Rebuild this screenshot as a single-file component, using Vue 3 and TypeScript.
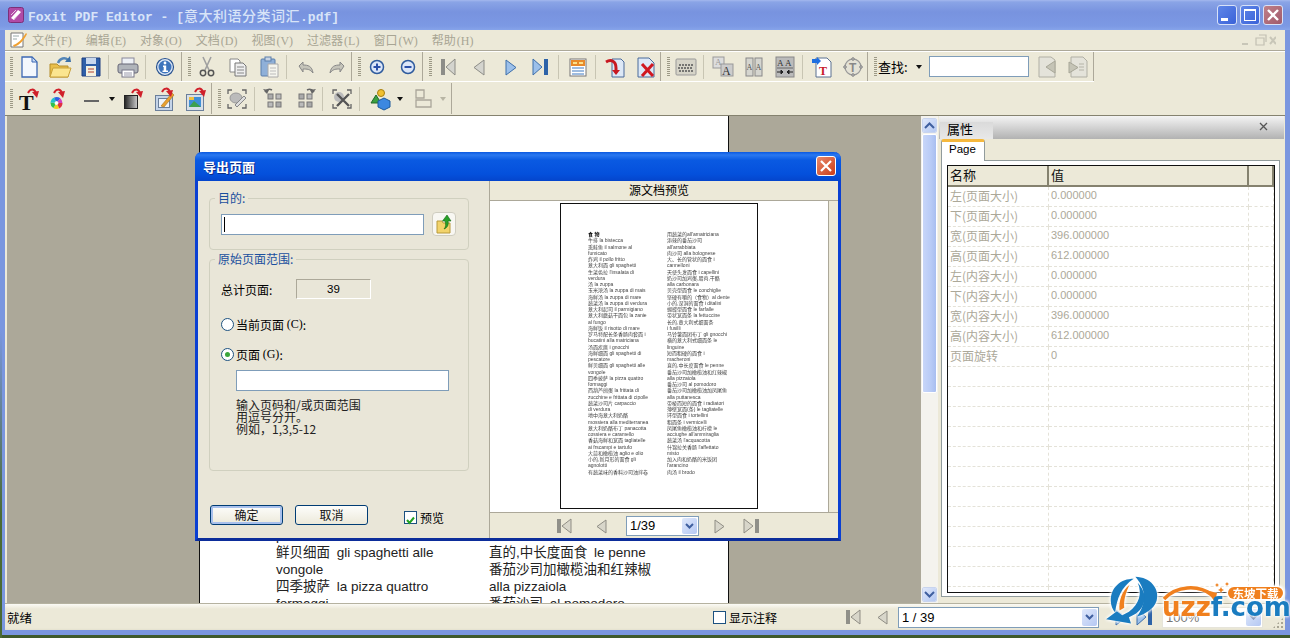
<template>
  <div class="desktop">
    <div class="window">
      <header class="titlebar">
        <svg class="app-icon" width="16" height="16" viewBox="0 0 16 16"><rect x="0.5" y="0.5" width="15" height="15" rx="2" fill="#b04aa6" stroke="#7c2f78" /><path d="M3 11L10 3l3 2-7 8z" fill="#fff" /><path d="M3 8l5-5M5 13l6-6" stroke="#e8c8e6" fill="none" /></svg>
        <span class="title-text">Foxit PDF Editor - [<span class="title-cjk">意大利语分类词汇</span>.pdf]</span>
        <div class="caption-btns">
          <button class="cap"><i class="cap-min"></i></button>
          <button class="cap"><i class="cap-max"></i></button>
          <button class="cap cap-close">
            <svg width="14" height="14" viewBox="0 0 14 14"><path d="M2 2l10 10M12 2L2 12" stroke="#fff" stroke-width="2.4" /></svg>
          </button>
        </div>
      </header>

      <nav class="menubar">
        <svg class="menu-icon" width="18" height="18" viewBox="0 0 18 18"><path d="M1 2h12v14H1z" fill="#fff" stroke="#777" /><path d="M3 14C8 13 12 8 16 2l1 1C14 9 10 14 4 16z" fill="#f0a030" /><path d="M3 5h6M3 8h4" stroke="#9aa" /></svg>
        <span v-for="m in menus" :key="m.label" class="menu-item">{{ m.label }}<em>({{ m.key }})</em></span>
        <div class="mdi-btns">
          <svg width="37" height="14" viewBox="0 0 37 14"><path d="M3 10h6v2H3z" fill="#c8c6b8" /><path d="M17 5h8v7h-8zM20 2h7v7" fill="none" stroke="#c2c0b2" stroke-width="1.2" /><path d="M31 4l6 7M37 4l-6 7" stroke="#c8c6b8" stroke-width="2" /></svg>
        </div>
      </nav>

      <div v-for="(row, r) in toolbars" :key="r" class="toolrow" :class="r === 0 ? 'row-top' : 'row-bottom'">
        <div v-for="(group, g) in row" :key="g" class="toolgroup" :class="{ 'with-pad': g === 0 }">
          <i class="grip"></i>
          <template v-for="(tool, t) in group" :key="t">
            <i v-if="tool === '|'" class="sep"></i>
            <span v-else-if="tool.endsWith('+')" class="tool drop">
              <svg width="24" height="24" viewBox="0 0 24 24" v-html="icons[tool.slice(0, -1)]"></svg>
              <i class="mini-arrow" :class="{ off: tool === 'layoutObj+' }"></i>
            </span>
            <span v-else class="tool">
              <svg width="24" height="24" viewBox="0 0 24 24" v-html="icons[tool]"></svg>
            </span>
          </template>
          <template v-if="r === 0 && g === row.length - 1">
            <span class="find-label">查找:</span>
            <i class="mini-arrow find-arrow"></i>
            <span class="find-input"></span>
            <span class="tool find-tool"><svg width="24" height="24" viewBox="0 0 24 24" v-html="icons.findPrev"></svg></span>
            <span class="tool find-tool"><svg width="24" height="24" viewBox="0 0 24 24" v-html="icons.findNext"></svg></span>
          </template>
        </div>
      </div>

      <main class="workspace">
        <section class="doc-area">
          <article class="doc-page">
            <div class="doc-cols">
              <div class="doc-col">
                <p>pescatore</p>
                <p>鲜贝细面&ensp;gli spaghetti alle</p>
                <p>vongole</p>
                <p>四季披萨&ensp;la pizza quattro</p>
                <p>formaggi</p>
              </div>
              <div class="doc-col">
                <p>macheroni</p>
                <p>直的,中长度面食&ensp;le penne</p>
                <p>番茄沙司加橄榄油和红辣椒</p>
                <p>alla pizzaiola</p>
                <p>番茄沙司&ensp;al pomodoro</p>
              </div>
            </div>
          </article>
        </section>

        <div class="vscroll">
          <span class="sb-btn"><svg width="11" height="7" viewBox="0 0 11 7"><path d="M1 6l4.500-4.500L10 6" fill="none" stroke="#3f5f9f" stroke-width="2" /></svg></span>
          <span class="sb-thumb"></span>
          <span class="sb-track"></span>
          <span class="sb-btn"><svg width="11" height="7" viewBox="0 0 11 7"><path d="M1 1l4.500 4.500L10 1" fill="none" stroke="#3f5f9f" stroke-width="2" /></svg></span>
        </div>

        <aside class="panel">
          <div class="panel-head">
            <span class="panel-tab">属性</span>
            <svg class="panel-x" width="9" height="9" viewBox="0 0 9 9"><path d="M1 1l7 7M8 1L1 8" stroke="#555" stroke-width="1.3" /></svg>
          </div>
          <div class="tabstrip"><span class="page-tab">Page</span></div>
          <div class="tab-body">
            <div class="grid">
              <div class="grid-row grid-head"><span>名称</span><span>值</span><span></span></div>
              <div v-for="(p, i) in gridRows" :key="i" class="grid-row">
                <span>{{ p[0] }}</span><span class="val">{{ p[1] }}</span><span></span>
              </div>
            </div>
          </div>
        </aside>
      </main>

      <footer class="statusbar">
        <span class="ready">就绪</span>
        <i class="check"></i>
        <span class="notes">显示注释</span>
        <span class="st-nav first"><svg width="24" height="24" viewBox="0 0 24 24" v-html="icons.firstOff"></svg></span>
        <span class="st-nav"><svg width="24" height="24" viewBox="0 0 24 24" v-html="icons.prevOff"></svg></span>
        <span class="combo page-combo">1 / 39<i class="combo-btn"><svg width="9" height="6" viewBox="0 0 9 6"><path d="M1 1l3.500 3.500L8 1" fill="none" stroke="#3f5f9f" stroke-width="2" /></svg></i></span>
        <span class="st-nav next"><svg width="24" height="24" viewBox="0 0 24 24" v-html="icons.next"></svg></span>
        <span class="st-nav last"><svg width="24" height="24" viewBox="0 0 24 24" v-html="icons.last"></svg></span>
        <span class="combo zoom-combo">100%<i class="combo-btn"><svg width="9" height="6" viewBox="0 0 9 6"><path d="M1 1l3.500 3.500L8 1" fill="none" stroke="#7f8fb0" stroke-width="2" /></svg></i></span>
        <i class="size-grip"></i>
      </footer>
    </div>

    <div class="dialog">
      <div class="dlg-title">
        <span>导出页面</span>
        <button class="dlg-close"><svg width="14" height="14" viewBox="0 0 14 14"><path d="M2 2l10 10M12 2L2 12" stroke="#fff" stroke-width="2.2" /></svg></button>
      </div>
      <div class="dlg-body">
        <div class="dlg-left">
          <fieldset class="fs fs-target">
            <legend>目的:</legend>
            <div class="target-row">
              <span class="input target-input"><i class="caret"></i></span>
              <span class="browse">
                <svg width="18" height="20" viewBox="0 0 18 20"><path d="M2 7h5l1 2h7v10H2z" fill="#f2d36a" stroke="#b89a3a" /><path d="M9 15c2-2 2-5 1-8H7.500L12 1l4 6h-3c1 4-1 7-4 8z" fill="#28a028" stroke="#106a10" stroke-width=".6" /></svg>
              </span>
            </div>
          </fieldset>
          <fieldset class="fs fs-range">
            <legend>原始页面范围:</legend>
            <div class="total-row">
              <span class="total-label">总计页面:</span>
              <span class="total-val">39</span>
            </div>
            <label class="radio-row first-radio"><i class="radio"></i>当前页面 <u>(C)</u>:</label>
            <label class="radio-row second-radio"><i class="radio on"></i>页面 <u>(G)</u>:</label>
            <span class="input pages-input"></span>
            <p class="hint">输入页码和/或页面范围<br />用逗号分开。<br />例如，1,3,5-12</p>
          </fieldset>
          <div class="dlg-foot">
            <button class="xp-btn default">确定</button>
            <button class="xp-btn">取消</button>
            <label class="preview-check"><i class="check checked"><svg width="11" height="11" viewBox="0 0 11 11"><path d="M2 5l2.500 3L9 2.500" fill="none" stroke="#21a121" stroke-width="2" /></svg></i>预览</label>
          </div>
        </div>
        <div class="dlg-right">
          <div class="pv-head">源文档预览</div>
          <div class="pv-main">
            <div class="pv-white">
              <div class="pv-page">
                <div class="pv-col">
                  <p v-for="(l, i) in previewLeft" :key="i" :class="{ head: i === 0 }">{{ l }}</p>
                </div>
                <div class="pv-col">
                  <p v-for="(l, i) in previewRight" :key="i">{{ l }}</p>
                </div>
              </div>
            </div>
          </div>
          <div class="pv-foot">
            <svg class="pv-first" width="24" height="24" viewBox="0 0 24 24" v-html="icons.firstOff"></svg>
            <svg class="pv-prev" width="24" height="24" viewBox="0 0 24 24" v-html="icons.prevOff"></svg>
            <span class="combo pv-combo">1/39<i class="combo-btn"><svg width="9" height="6" viewBox="0 0 9 6"><path d="M1 1l3.500 3.500L8 1" fill="none" stroke="#3f5f9f" stroke-width="2" /></svg></i></span>
            <svg class="pv-next" width="24" height="24" viewBox="0 0 24 24" v-html="icons.nextOff"></svg>
            <svg class="pv-last" width="24" height="24" viewBox="0 0 24 24" v-html="icons.lastOff"></svg>
          </div>
        </div>
      </div>
    </div>

    <div class="watermark">
      <svg class="wm-mark" width="64" height="54" viewBox="0 0 190 160">
        <path d="M105 14C150 15 178 50 168 85 160 110 135 124 110 132 130 105 146 60 105 14z" fill="#1a7cc0" />
        <path d="M100 20C62 20 32 45 32 85 32 100 38 112 45 120 50 80 62 45 100 20z" fill="#1a7cc0" />
        <path d="M88 38C66 55 55 85 58 114L72 106C70 85 76 60 88 38z" fill="#f0801e" />
        <path d="M112 32C126 65 116 95 86 118L66 128 50 116 18 140 92 153 86 134C128 120 152 75 112 32z" fill="#1a7cc0" />
      </svg>
      <svg class="wm-arc" width="72" height="24" viewBox="0 0 72 24">
        <path d="M2 17C14 4 36 2 50 13" fill="none" stroke="#f0801e" stroke-width="3.500" />
        <path d="M44 8l11 3-2 9z" fill="#f0801e" />
        <path d="M59 5l1 2 2 1-2 1-1 2-1-2-2-1 2-1zM55 1l.7 1.300L57 3l-1.300.7L55 5l-.7-1.300L53 3l1.300-.7zM65 0l.7 1.300L67 2l-1.300.7L65 4l-.7-1.300L63 2l1.300-.7z" fill="#f0801e" />
      </svg>
      <span class="wm-badge">东坡下载</span>
      <span class="wm-uzzf">uzz<span class="wm-com">f.com</span></span>
    </div>
    <i class="desk-edge"></i>
  </div>
</template>

<script setup lang="ts">
const menus = [
  { label: '文件', key: 'F' },
  { label: '编辑', key: 'E' },
  { label: '对象', key: 'O' },
  { label: '文档', key: 'D' },
  { label: '视图', key: 'V' },
  { label: '过滤器', key: 'L' },
  { label: '窗口', key: 'W' },
  { label: '帮助', key: 'H' },
];

const redArrow = (x: number, y: number) =>
  `<path d="M${x} ${y + 4}C${x + 2} ${y} ${x + 6} ${y - 1} ${x + 8} ${y + 4}" fill="none" stroke="#d0202a" stroke-width="2"/><path d="M${x + 4} ${y + 3}l7-1-2 7z" fill="#d0202a"/>`;
const dashed = '<path d="M3 7V3h4M17 3h4v4M21 17v4h-4M7 21H3v-4" fill="none" stroke="#666" stroke-width="1.300"/>';
const nodes = '<rect x="6" y="7" width="5" height="5" fill="#aaa" stroke="#777"/><rect x="14" y="7" width="5" height="5" fill="#bbb" stroke="#777"/><rect x="6" y="15" width="5" height="5" fill="#bbb" stroke="#777"/><rect x="14" y="15" width="5" height="5" fill="#aaa" stroke="#777"/>';
const letter = (x: number, y: number, s: number, c = '#555') =>
  `<text x="${x}" y="${y}" font-family="Liberation Serif" font-size="${s}" fill="${c}">A</text>`;
const wheel = ['#e03040', '#f0d020', '#30c050', '#20c0d0', '#3060e0', '#d040c0']
  .map((c, i) => `<circle cx="8.500" cy="16" r="4" fill="none" stroke="${c}" stroke-width="4" stroke-dasharray="4.300 21" stroke-dashoffset="${-i * 4.19}"/>`)
  .join('');

const icons: Record<string, string> = {
  new: '<path d="M5 2h10l5 5v15H5z" fill="#f3f7fd" stroke="#3c68b4" stroke-width="1.300"/><path d="M15 2v5h5z" fill="#c8dbf5" stroke="#3c68b4"/>',
  open: '<path d="M2 9h7l2 2h9v11H2z" fill="#e9bf4a" stroke="#b58d2a"/><path d="M2 22l3-9h18l-3 9z" fill="#fbe58f" stroke="#c9a13a"/><path d="M10 8c2-5 7-6 10-3" fill="none" stroke="#5486b8" stroke-width="2.500"/><path d="M17 7h6l-1-6z" fill="#3a70a8"/>',
  save: '<path d="M3 3h18v18H3z" fill="#2f5fa8" stroke="#1e3f80"/><rect x="7" y="3" width="10" height="6" fill="#c9d8ee"/><rect x="7" y="11" width="10" height="10" fill="#f4f1e0"/><path d="M9 14h6M9 17h6" stroke="#b04030"/>',
  print: '<rect x="6" y="3" width="12" height="7" fill="#eef1f6" stroke="#889"/><rect x="2" y="9" width="20" height="9" rx="2" fill="#b0b4ba" stroke="#667"/><rect x="6" y="15" width="12" height="7" fill="#fff" stroke="#778"/><path d="M8 18h8M8 20h8" stroke="#99a"/>',
  info: '<circle cx="12" cy="12" r="8.500" fill="#dbe6f5" stroke="#28528f" stroke-width="1.200"/><circle cx="12" cy="12" r="6.500" fill="#3d74bc"/><circle cx="12" cy="8" r="1.400" fill="#fff"/><path d="M10 10.500h3.200v5H15V17H9.500v-1.500h1.200v-3.500H10z" fill="#fff"/>',
  cut: '<path d="M8 2l6 13M16 2l-6 13" stroke="#a0a0a0" stroke-width="1.600"/><circle cx="8" cy="18" r="2.700" fill="none" stroke="#555" stroke-width="1.500"/><circle cx="16" cy="18" r="2.700" fill="none" stroke="#555" stroke-width="1.500"/>',
  copy: '<path d="M4 4h8l2 2v11H4z" fill="#fff" stroke="#888"/><path d="M9 8h8l3 3v10H9z" fill="#eee" stroke="#777"/><path d="M11 12h7M11 15h7M11 18h7" stroke="#888"/>',
  paste: '<rect x="4" y="4" width="14" height="17" rx="1" fill="#8fb0d8" stroke="#5b7eab"/><rect x="8" y="2" width="6" height="4" fill="#c8d4e4" stroke="#5b7eab"/><path d="M11 9h10v13H11z" fill="#f5f5ee" stroke="#aaa"/><path d="M13 13h6M13 16h6M13 19h6" stroke="#bbb"/>',
  undo: '<path d="M5 11l4-4v3c5 0 9 1 10 8-3-4-6-4-10-4v3z" fill="#c5c4ba" stroke="#888"/>',
  redo: '<path d="M19 11l-4-4v3c-5 0-9 1-10 8 3-4 6-4 10-4v3z" fill="#c5c4ba" stroke="#888"/>',
  zoomIn: '<circle cx="12" cy="12" r="6.500" fill="#dbe6f8" stroke="#2f5b9d" stroke-width="1.500"/><path d="M8.500 12h7M12 8.500v7" stroke="#2a4fa8" stroke-width="2"/>',
  zoomOut: '<circle cx="12" cy="12" r="6.500" fill="#dbe6f8" stroke="#2f5b9d" stroke-width="1.500"/><path d="M8.500 12h7" stroke="#2a4fa8" stroke-width="2"/>',
  first: '<rect x="5" y="4" width="4" height="16" fill="#8d8d88"/><path d="M19 4v16l-9-8z" fill="#d4d4ce" stroke="#8c8c86"/>',
  prev: '<path d="M17 5v15l-10-7.500z" fill="#d4d4ce" stroke="#8c8c86"/>',
  next: '<path d="M8 5v15l10-7.500z" fill="#9cc0ea" stroke="#3d6eaa"/>',
  last: '<path d="M4 4v16l9-8z" fill="#9cc0ea" stroke="#3d6eaa"/><rect x="15" y="4" width="4" height="16" fill="#2e63a8"/>',
  firstOff: '<rect x="5" y="5" width="4" height="14" fill="#909089"/><path d="M19 5v14l-9-7z" fill="#d8d6ca" stroke="#8f8d84"/>',
  prevOff: '<path d="M16 6v13l-9-6.500z" fill="#d8d6ca" stroke="#8f8d84"/>',
  nextOff: '<path d="M8 6v13l9-6.500z" fill="#d8d6ca" stroke="#8f8d84"/>',
  lastOff: '<path d="M4 5v14l9-7z" fill="#d8d6ca" stroke="#8f8d84"/><rect x="15" y="5" width="4" height="14" fill="#909089"/>',
  layout: '<rect x="4" y="4" width="16" height="17" fill="#fff" stroke="#777"/><rect x="5" y="5" width="14" height="6" fill="#e88a2a"/><path d="M7 8h4M13 8h4" stroke="#fbe08a" stroke-width="2"/><path d="M6 13h12M6 16h12M6 19h12" stroke="#7fa6d6" stroke-width="1.500"/>',
  rotate: '<path d="M9 4h9l3 3v15H9z" fill="#dde8f6" stroke="#4a6a9a"/><path d="M3 7c5-3 10-1 10 6v3" fill="none" stroke="#c81820" stroke-width="3"/><path d="M9 15h8l-4 5z" fill="#c81820"/>',
  remove: '<path d="M4 3h11l5 5v14H4z" fill="#dde8f6" stroke="#4a6a9a"/><path d="M8 9l11 12M19 9L8 21" stroke="#d01820" stroke-width="3"/>',
  keyboard: '<rect x="2" y="4" width="20" height="16" rx="1" fill="#d6d4c8" stroke="#999"/><path d="M5 10h14M4 13h15M5 16h14" stroke="#555" stroke-width="1.300" stroke-dasharray="2 1"/>',
  fontSize: `<rect x="2" y="2" width="11" height="11" fill="#ddd" stroke="#999"/><rect x="10" y="9" width="12" height="12" fill="#ccc" stroke="#999"/>${letter(4, 10, 9, '#999')}${letter(11, 20, 12, '#333')}`,
  charSpace: `<rect x="4" y="3" width="7" height="18" fill="#d5d5cf" stroke="#888"/><rect x="13" y="3" width="7" height="18" fill="#d5d5cf" stroke="#888"/>${letter(4.500, 15, 8)}${letter(13.500, 15, 8)}`,
  wordSpace: `<rect x="3" y="2" width="18" height="20" fill="#bbb" stroke="#888"/>${letter(4, 11, 9, '#333')}${letter(12, 11, 9, '#333')}<path d="M4 13h16" stroke="#666"/><path d="M4 17h4m2 0l-2-2v4zM20 17h-4m-2 0l2-2v4z" stroke="#222" fill="#222"/>`,
  textEdit: '<path d="M6 3h11l4 4v15H6z" fill="#fff" stroke="#5a7090"/><path d="M2 4h5V2l4 4-4 4V8H2z" fill="#1f6fe0"/><text x="9" y="20" font-family="Liberation Serif" font-weight="bold" font-size="12" fill="#c8202a">T</text>',
  textFrame: '<circle cx="12" cy="12" r="8" fill="#e4e2d6" stroke="#999" stroke-width="1.300"/><circle cx="12" cy="4" r="1.300" fill="#bbb" stroke="#888"/><circle cx="12" cy="20" r="1.300" fill="#bbb" stroke="#888"/><circle cx="4" cy="12" r="1.300" fill="#bbb" stroke="#888"/><circle cx="20" cy="12" r="1.300" fill="#bbb" stroke="#888"/><text x="8" y="16.500" font-family="Liberation Sans" font-weight="bold" font-size="12" fill="#888">T</text>',
  findPrev: '<path d="M4 2h12l4 3v17H4z" fill="#e4e3da" stroke="#b0afa4"/><path d="M20 6v12l-9-6z" fill="#c5c4b6" stroke="#a8a798"/>',
  findNext: '<path d="M5 2h12l4 4v16H5z" fill="#e4e3da" stroke="#b0afa4"/><path d="M3 7v11l9-5.500z" fill="#c5c4b6" stroke="#a8a798"/><path d="M13 9h5M13 12h5M13 15h5" stroke="#b5b4a8"/>',
  text: `<text x="2" y="23" font-family="Liberation Serif" font-weight="bold" font-size="22" fill="#111">T</text>${redArrow(11, 2)}`,
  color: `${wheel}<circle cx="8.500" cy="16" r="1.500" fill="#fff"/>${redArrow(6, 2)}`,
  line: '<path d="M4 14h15" stroke="#666" stroke-width="2"/>',
  fill: `<defs><linearGradient id="fg"><stop offset="0" stop-color="#222"/><stop offset="1" stop-color="#ccc"/></linearGradient></defs><rect x="2.500" y="8.500" width="13" height="13" fill="url(#fg)" stroke="#222"/>${redArrow(10, 2)}`,
  imageEdit: `<rect x="2.500" y="8.500" width="17" height="15" fill="#c5d4e8" stroke="#6b7f9a"/><rect x="5.500" y="11.500" width="11" height="9" fill="#eef3fa" stroke="#6b7f9a"/><path d="M8 19L19 6l2 2-10 12z" fill="#e8a030" stroke="#a87018" stroke-width=".6"/>${redArrow(9, 1)}`,
  imageAdd: `<rect x="2.500" y="7.500" width="17" height="16" fill="#d8dfe8" stroke="#6b7f9a"/><rect x="5" y="10" width="12" height="10" fill="#3f8fd8"/><path d="M5 20l5-6 7 6z" fill="#3ea050"/><rect x="5" y="10" width="5" height="3" fill="#f0c040"/>${redArrow(11, 1)}`,
  shapeEdit: `${dashed}<ellipse cx="11" cy="11" rx="6" ry="5" fill="#bbb" stroke="#999"/><path d="M10 18L19 9l2 2-9 9z" fill="#ddd" stroke="#888"/>`,
  rotLeft: `${nodes}<path d="M3 5c2-3 5-3 7-2" fill="none" stroke="#666" stroke-width="1.500"/><path d="M1 2l4 5 2-4z" fill="#666"/>`,
  rotRight: `${nodes}<path d="M21 5c-2-3-5-3-7-2" fill="none" stroke="#666" stroke-width="1.500"/><path d="M23 2l-4 5-2-4z" fill="#666"/>`,
  shapeDel: `${dashed}<ellipse cx="9" cy="10" rx="5" ry="5" fill="#bbb"/><path d="M7 7l12 12M19 7L7 19" stroke="#555" stroke-width="2.400"/>`,
  objects: '<circle cx="13" cy="6" r="3.500" fill="#f0c030" stroke="#a88010"/><path d="M8 8l5 8H3z" fill="#3ca040" stroke="#206a28"/><path d="M16 11l6 3v6l-6 3-6-3v-6z" fill="#3c88e0" stroke="#1c5a9c"/>',
  layoutObj: '<path d="M5 3h8v8H5zM5 13h15v7H5z" fill="none" stroke="#aaa69a" stroke-width="1.300"/>',
};

const toolbars: string[][][] = [
  [
    ['new', 'open', 'save', '|', 'print', '|', 'info'],
    ['cut', 'copy', 'paste', '|', 'undo', 'redo'],
    ['zoomIn', 'zoomOut'],
    ['first', 'prev', 'next', 'last', '|', 'layout', '|', 'rotate', 'remove'],
    ['keyboard', '|', 'fontSize', 'charSpace', 'wordSpace', '|', 'textEdit', 'textFrame'],
    [],
  ],
  [
    ['text', 'color', 'line+', 'fill', 'imageEdit', 'imageAdd'],
    ['shapeEdit', '|', 'rotLeft', 'rotRight', '|', 'shapeDel', '|', 'objects+', 'layoutObj+'],
  ],
];

const props = ['左(页面大小)', '下(页面大小)', '宽(页面大小)', '高(页面大小)', '左(内容大小)', '下(内容大小)', '宽(内容大小)', '高(内容大小)', '页面旋转'];
const vals = ['0.000000', '0.000000', '396.000000', '612.000000', '0.000000', '0.000000', '396.000000', '612.000000', '0'];
const gridRows = Array.from({ length: 21 }, (_, i) => [props[i] ?? '', vals[i] ?? '']);

const previewLeft = [
  '食  物', '牛排 la bistecca', '熏鲑鱼 il salmone al', 'fumicato', '炸鸡 il pollo fritto', '意大利面 gli spaghetti',
  '生菜色拉 l\'insalata di', 'verdura', '汤 la zuppa', '玉米浓汤 la zuppa di mais', '海鲜汤 la zuppa di mare',
  '蔬菜汤 la zuppa di verdura', '意大利起司 il parmigiano', '意大利蘑菇干面包 la zanie', 'al fungo', '海鲜饭 il risotto di mare',
  '罗马特配长条香肠肉套面 i', 'bucatini alla matriciana', '汤面疙瘩 i gnocchi', '海鲜细面 gli spaghetti di', 'pescatore',
  '鲜贝细面 gli spaghetti alle', 'vongole', '四季披萨 la pizza quattro', 'formaggi', '西葫芦煎蛋 la frittata di',
  'zucchine e frittata di cipolle', '蔬菜沙司片 carpaccio', 'di verdura', '地中海意大利奶酪', 'mossiera alla mediterranea',
  '意大利奶酪布丁 panacotta', 'cossiera e caramello', '香菇海鲜和宽面 tagliatelle', 'ai frscampi e tartufo',
  '大蒜和橄榄油 aglio e olio', '小的,新月形的面食 gli', 'agnolotti', '有蔬菜味的香料沙司油拌卷',
];
const previewRight = [
  '用蔬菜的all\'amatriciana', '添辣的番茄沙司', 'all\'arrabbiata', '肉沙司 alla bolognese', '大、长的管状的面食 i', 'cannelloni',
  '天使头发面食 i capellini', '奶沙司加鸡蛋,腊肉,干酪', 'alla carbonara', '贝壳型面食 le conchiglie', '坚硬有嚼的（食物）al dente',
  '小的,深洞的面食 i ditalini', '蝴蝶型面食 le farfalle', '带状宽面条 la fettuccine', '长的,意大利式细面条', 'i fusilli',
  '马铃薯面团布丁 gli gnocchi', '横的意大利式细面条 le', 'linguine', '短而粗硬的面食 i', 'macheroni', '直的,中长度面食 le penne',
  '番茄沙司加橄榄油和红辣椒', 'alla pizzaiola', '番茄沙司 al pomodoro', '番茄沙司加橄榄油加凤尾鱼', 'alla puttanesca',
  '带棱而短的面食 i radiatori', '薄壁宽面(条) le tagliatelle', '环型面食 i tortellini', '粗面条 i vermicelli',
  '凤尾鱼橄榄油和柠檬 le', 'acciughe all\'ammiraglia', '蔬菜汤 l\'acquacotta', '什锦拉关香肠 l\'affettato', 'misto',
  '加入肉和奶酪的米饭团', 'l\'arancino', '肉汤 il brodo',
];
</script>

<style>
html, body { margin: 0; overflow: hidden; }
</style>

<style scoped>
.desktop { position: relative; width: 1290px; height: 638px; overflow: hidden; background: #3f5a2c; font-family: "Noto Sans CJK SC", "Liberation Sans", sans-serif; font-size: 12px; color: #000; }
.window { display: flex; flex-direction: column; height: 635px; box-sizing: border-box; padding: 0 5px 5px; background: #7a96df; }
.desk-edge { position: absolute; left: 0; top: 330px; bottom: 0; width: 2px; background: linear-gradient(#7a96df, #4a6a34 60%); }
p { margin: 0; }
i { display: block; font-style: normal; }
button { font: inherit; padding: 0; }

.titlebar { display: flex; align-items: center; height: 30px; margin: 0 -5px; padding: 0 7px 0 8px; flex: none; box-sizing: border-box; background: linear-gradient(#a4b8ee 0, #8aa4e6 2px, #7893df 12px, #7c99e4 26px, #86a4ea 30px); }
.app-icon { flex: none; }
.title-text { margin-left: 4px; font-family: "Liberation Mono", monospace; font-weight: bold; font-size: 13px; color: #d8e4f8; white-space: pre; }
.title-cjk { font-family: "Noto Sans CJK SC", sans-serif; font-size: 14px; letter-spacing: .5px; font-weight: 500; }
.caption-btns { display: flex; gap: 3px; margin-left: auto; }
.cap { width: 20px; height: 20px; border: 1px solid #d8e2f8; border-radius: 3px; background: linear-gradient(135deg, #5f86e8, #3a62d8); position: relative; display: flex; align-items: center; justify-content: center; }
.cap-close { background: linear-gradient(135deg, #c08088, #a05a6c); }
.cap-min { width: 7px; height: 3px; background: #fff; margin: 8px 5px 0 0; }
.cap-max { width: 10px; height: 9px; border: 1px solid #fff; border-top-width: 2px; }

.menubar { display: flex; align-items: center; height: 20px; flex: none; padding-left: 5px; background: #ece9d8; color: #a8a594; box-sizing: border-box; }
.menu-icon { flex: none; margin-right: -2px; }
.menu-item { padding: 0 8px 0 6px; white-space: nowrap; font-size: 12px; line-height: 20px; }
.menu-item em { font-style: normal; font-family: "Liberation Serif", serif; margin-left: 1px; }
.mdi-btns { margin-left: auto; margin-right: 9px; height: 14px; }

.toolrow { display: flex; flex: none; background: #ece9d8; box-sizing: border-box; }
.row-top { height: 32px; border-top: 1px solid #aca899; box-shadow: inset 0 1px #fff; padding-top: 1px; }
.row-bottom { height: 33px; padding-top: 1px; }
.toolgroup { display: flex; align-items: center; height: 30px; padding-left: 6px; box-sizing: border-box; box-shadow: inset -1px 0 #aca899; position: relative; }
.row-top .toolgroup { border-bottom: 1px solid #fff; }
.row-bottom .toolgroup { height: 31px; }
.toolgroup.with-pad { padding-left: 5px; padding-right: 2px; }
.row-bottom .toolgroup.with-pad { padding-right: 1px; }
.row-bottom .toolgroup:last-child { padding-right: 3px; }
.grip { width: 3px; height: 20px; flex: none; background: repeating-linear-gradient(#9c9986 0 1px, transparent 1px 2px); }
.sep { width: 1px; height: 24px; margin: 0 3px 0 2px; background: #c8c5b3; flex: none; }
.tool { display: flex; align-items: center; justify-content: center; width: 31px; height: 24px; flex: none; }
.tool.drop { width: 43px; justify-content: flex-start; padding-left: 5px; box-sizing: border-box; }
.mini-arrow { width: 0; height: 0; margin-left: 5px; border: 3.5px solid transparent; border-top: 4px solid #111; border-bottom: 0; }
.mini-arrow.off { border-top-color: #b8b5a4; }
.toolgroup:last-child .find-label { margin-left: 1px; font-size: 13px; white-space: nowrap; }
.find-arrow { margin-left: 8px; margin-right: 7px; }
.find-input { width: 100px; height: 21px; box-sizing: border-box; border: 1px solid #7f9db9; background: #fff; flex: none; margin-right: 3px; }
.tool.find-tool { width: 31px; }

.workspace { display: flex; flex: 1; min-height: 0; border-top: 1px solid #85826f; background: #ece9d8; }
.doc-area { width: 914px; margin-left: 2px; flex: none; background: #aca899; overflow: hidden; }
.doc-page { width: 530px; height: 100%; margin-left: 192px; box-sizing: border-box; background: #fff; border: solid #111; border-width: 0 1px; display: flex; flex-direction: column; justify-content: flex-end; overflow: hidden; color: #222; }
.doc-cols { display: flex; margin-bottom: -9px; padding-left: 76px; }
.doc-col { width: 213px; font-size: 13.5px; line-height: 17px; white-space: pre; font-family: "Liberation Sans", "Noto Sans CJK SC", sans-serif; }

.vscroll { width: 17px; flex: none; display: flex; flex-direction: column; align-items: center; background: #f4f3ee; padding: 2px 0 1px; box-sizing: border-box; gap: 1px; }
.sb-btn { width: 15px; height: 15px; box-sizing: border-box; border: 1px solid #fff; border-radius: 2px; background: linear-gradient(135deg, #e0e8fa, #b4c8f2); display: flex; align-items: center; justify-content: center; flex: none; outline: 1px solid #c8d4ee; outline-offset: -1px; }
.sb-thumb { width: 15px; height: 259px; box-sizing: border-box; border: 1px solid #fff; border-radius: 2px; background: linear-gradient(90deg, #c8d6f8, #b8cbf6 60%, #a8bef0); flex: none; }
.sb-track { flex: 1; }

.panel { flex: 1; min-width: 0; display: flex; flex-direction: column; }
.panel-head { height: 23px; display: flex; align-items: flex-end; background: linear-gradient(#f4f4f4, #b2b2b2); position: relative; margin: 0 1px; flex: none; }
.panel-tab { width: 53px; height: 17px; line-height: 14px; padding-left: 7px; box-sizing: border-box; margin-left: 1px; font-size: 13px; background: linear-gradient(#dadada, #e8e8e8); }
.panel-x { position: absolute; right: 16px; top: 6px; }
.tabstrip { height: 21px; flex: none; padding-left: 3px; display: flex; }
.page-tab { width: 44px; box-sizing: border-box; padding-left: 7px; border: 1px solid #919b9c; border-top: 3px solid #f5b83d; border-bottom: 0; border-radius: 3px 3px 0 0; background: #fff; font: 11.5px/14px "Liberation Sans", sans-serif; margin-bottom: -1px; z-index: 1; }
.tab-body { flex: 1; min-height: 0; margin: 0 5px 6px 3px; box-sizing: border-box; padding: 4px 4px 3px 5px; border: 1px solid #919b9c; background: #fff; }
.grid { height: 100%; box-sizing: border-box; border: 1px solid #111; overflow: hidden; }
.grid-row { display: grid; grid-template-columns: 101px 200px 1fr; height: 20px; line-height: 17px; color: #aca899; white-space: nowrap; }
.grid-row > span { border: dashed #e4e2d8; border-width: 0 1px 1px 0; padding-left: 2px; overflow: hidden; font-size: 12px; }
.grid-row > .val { font: 11px/17px "Liberation Sans", sans-serif; }
.grid-head { height: 21px; line-height: 17px; color: #111; background: #ece9d8; }
.grid-head > span { border: solid #85826f; border-width: 0 2px 2px 0; font-size: 13px; background: #ece9d8; }

.statusbar { display: flex; align-items: center; height: 27px; flex: none; background: linear-gradient(#fbfaf5 0, #ece9d8 5px, #ece9d8 24px, #e4e1cf); border-top: 1px solid #b5b2a0; box-sizing: border-box; position: relative; }
.ready { width: 708px; padding-left: 2px; box-sizing: border-box; font-size: 12.5px; }
.check { width: 13px; height: 13px; box-sizing: border-box; border: 1px solid #1c5180; background: #fff; flex: none; }
.notes { margin-left: 3px; font-size: 12px; width: 60px; white-space: nowrap; }
.st-nav { width: 24px; height: 24px; flex: none; }
.st-nav.first { margin-left: 52px; }
.st-nav + .st-nav { margin-left: 6px; }
.combo { display: flex; align-items: center; box-sizing: border-box; height: 21px; background: #fff; border: 1px solid #7f9db9; padding-left: 3px; font: 13px "Liberation Sans", sans-serif; position: relative; flex: none; }
.combo-btn { position: absolute; right: 1px; top: 1px; bottom: 1px; width: 15px; border-radius: 2px; background: linear-gradient(135deg, #dfe8fb, #b5c8f3); display: flex; align-items: center; justify-content: center; }
.page-combo { width: 201px; margin-left: 3px; }
.st-nav.next { margin-left: 9px; }
.st-nav.last { margin-left: 1px; }
.zoom-combo { width: 101px; margin-left: 5px; color: #777; border-color: #e6e4da; }
.size-grip { position: absolute; right: 2px; bottom: 2px; width: 10px; height: 10px; background: radial-gradient(circle at 1px 1px, #a8a594 1px, transparent 1.2px) 0 0 / 4px 4px; clip-path: polygon(100% 0, 100% 100%, 0 100%); }

.dialog { position: absolute; left: 195px; top: 152px; width: 646px; height: 389px; box-sizing: border-box; border: solid #0a3fd2; border-width: 0 3px 3px; border-radius: 7px 7px 0 0; background: #ece9d8; display: flex; flex-direction: column; border-bottom-color: #0c2d9a; }
.dlg-title { height: 29px; margin: 0 -3px; display: flex; align-items: center; justify-content: space-between; padding: 0 5px 1px 8px; box-sizing: border-box; flex: none; border-radius: 7px 7px 0 0; background: linear-gradient(#0a58e0 0, #2a78f0 3px, #0a5ae2 8px, #0450dc 22px, #0445cc 29px); color: #fff; font-size: 13px; font-weight: 700; text-shadow: 1px 1px #0a2a88; }
.dlg-close { width: 20px; height: 20px; border: 1px solid #fff; border-radius: 3px; background: linear-gradient(135deg, #e88a6c, #cc3c18); display: flex; align-items: center; justify-content: center; }
.dlg-body { flex: 1; display: flex; min-height: 0; }
.dlg-left { width: 292px; box-sizing: border-box; flex: none; padding: 9px 0 0 11px; border-right: 1px solid #aca899; display: flex; flex-direction: column; background: #e9e6d8; }
.fs { margin: 0; width: 260px; box-sizing: border-box; border: 1px solid #d0d0bf; border-radius: 4px; padding: 0; min-width: 0; }
.fs legend { margin-left: 5px; padding: 0 3px; height: 16px; line-height: 16px; font-size: 12px; color: #1a4f9e; }
.target-row { display: flex; align-items: center; gap: 8px; padding: 6px 0 13px 11px; }
.input { display: block; box-sizing: border-box; height: 21px; border: 1px solid #7f9db9; background: #fff; }
.target-input { width: 203px; position: relative; }
.caret { position: absolute; left: 2px; top: 2px; width: 1px; height: 15px; background: #000; }
.browse { width: 24px; height: 24px; box-sizing: border-box; border: 1px solid #cfcdc0; border-radius: 4px; background: #f8f7f2; display: flex; align-items: center; justify-content: center; }
.fs-range { margin-top: 1px; height: 220px; }
.total-row { display: flex; align-items: center; padding: 12px 0 0 11px; }
.total-label { width: 75px; }
.total-val { width: 75px; height: 20px; text-align: center; box-sizing: border-box; border: 1px solid; border-color: #aca899 #fff #fff #aca899; font: 11.5px/18px "Liberation Sans", sans-serif; }
.radio-row { display: flex; align-items: center; height: 16px; padding-left: 11px; white-space: pre; }
.radio-row u { text-decoration: none; font-family: "Liberation Serif", serif; }
.first-radio { margin-top: 17px; }
.second-radio { margin-top: 14px; }
.radio { width: 13px; height: 13px; box-sizing: border-box; border: 1px solid #1c5180; border-radius: 50%; background: #fff; margin-right: 2px; position: relative; }
.radio.on::after { content: ""; position: absolute; left: 3px; top: 3px; width: 5px; height: 5px; border-radius: 50%; background: #3aa53a; }
.pages-input { width: 213px; margin: 8px 0 0 26px; }
.hint { margin: 8px 0 0 26px; font-size: 12px; line-height: 12px; color: #222; }
.dlg-foot { display: flex; align-items: center; margin-top: auto; margin-bottom: 12px; margin-left: 1px; gap: 12px; }
.xp-btn { width: 73px; height: 20px; box-sizing: border-box; border: 1px solid #003c74; border-radius: 3px; background: linear-gradient(#fdfdfb, #ece9da); font-size: 12px; line-height: 16px; color: #111; }
.xp-btn.default { box-shadow: inset 0 0 0 2px #a8c0ec; }
.preview-check { display: flex; align-items: center; gap: 3px; margin-left: 24px; margin-top: 5px; font-size: 12px; }
.dlg-right { flex: 1; display: flex; flex-direction: column; min-width: 0; background: #ece9d8; }
.pv-head { height: 20px; line-height: 18px; text-align: center; flex: none; box-sizing: border-box; border-bottom: 1px solid #aca899; padding-right: 10px; }
.pv-main { flex: 1; display: flex; min-height: 0; }
.pv-white { width: 339px; box-sizing: border-box; padding: 2px 0 3px; background: #fff; display: flex; justify-content: center; border-right: 1px solid #aca899; }
.pv-page { width: 198px; box-sizing: border-box; border: 1px solid #111; background: #fff; display: flex; padding: 27px 0 0 27px; overflow: hidden; }
.pv-col { width: 79px; flex: none; font: 5px/6.25px "Liberation Sans", "Noto Sans CJK SC", sans-serif; white-space: nowrap; color: #444; filter: blur(.25px); }
.pv-col .head { font-weight: 700; color: #000; }
.pv-foot { height: 26px; flex: none; box-sizing: border-box; border-top: 1px solid #aca899; display: flex; align-items: center; }
.pv-first { margin-left: 62px; }
.pv-prev { margin-left: 14px; }
.pv-combo { width: 73px; height: 20px; margin-left: 12px; }
.pv-next { margin-left: 8px; }
.pv-last { margin-left: 9px; }

.watermark { position: absolute; left: 1100px; top: 572px; width: 190px; height: 66px; filter: drop-shadow(0 0 1.5px #fff) drop-shadow(0 0 1.5px #fff); }
.wm-mark { position: absolute; left: 0; top: 0; }
.wm-arc { position: absolute; left: 62px; top: 10px; }
.wm-badge { position: absolute; left: 128px; top: 15px; width: 55px; height: 12px; line-height: 12px; text-align: center; border-radius: 6px; background: #f0801e; color: #fff; font-size: 11.5px; font-weight: 700; box-shadow: 0 0 0 1px #fff; white-space: nowrap; }
.wm-uzzf { position: absolute; left: 62px; top: 27px; font: 700 26px/16px "DejaVu Sans", sans-serif; color: #f0801e; white-space: nowrap; }
.wm-com { color: #1a7cc0; }
</style>
